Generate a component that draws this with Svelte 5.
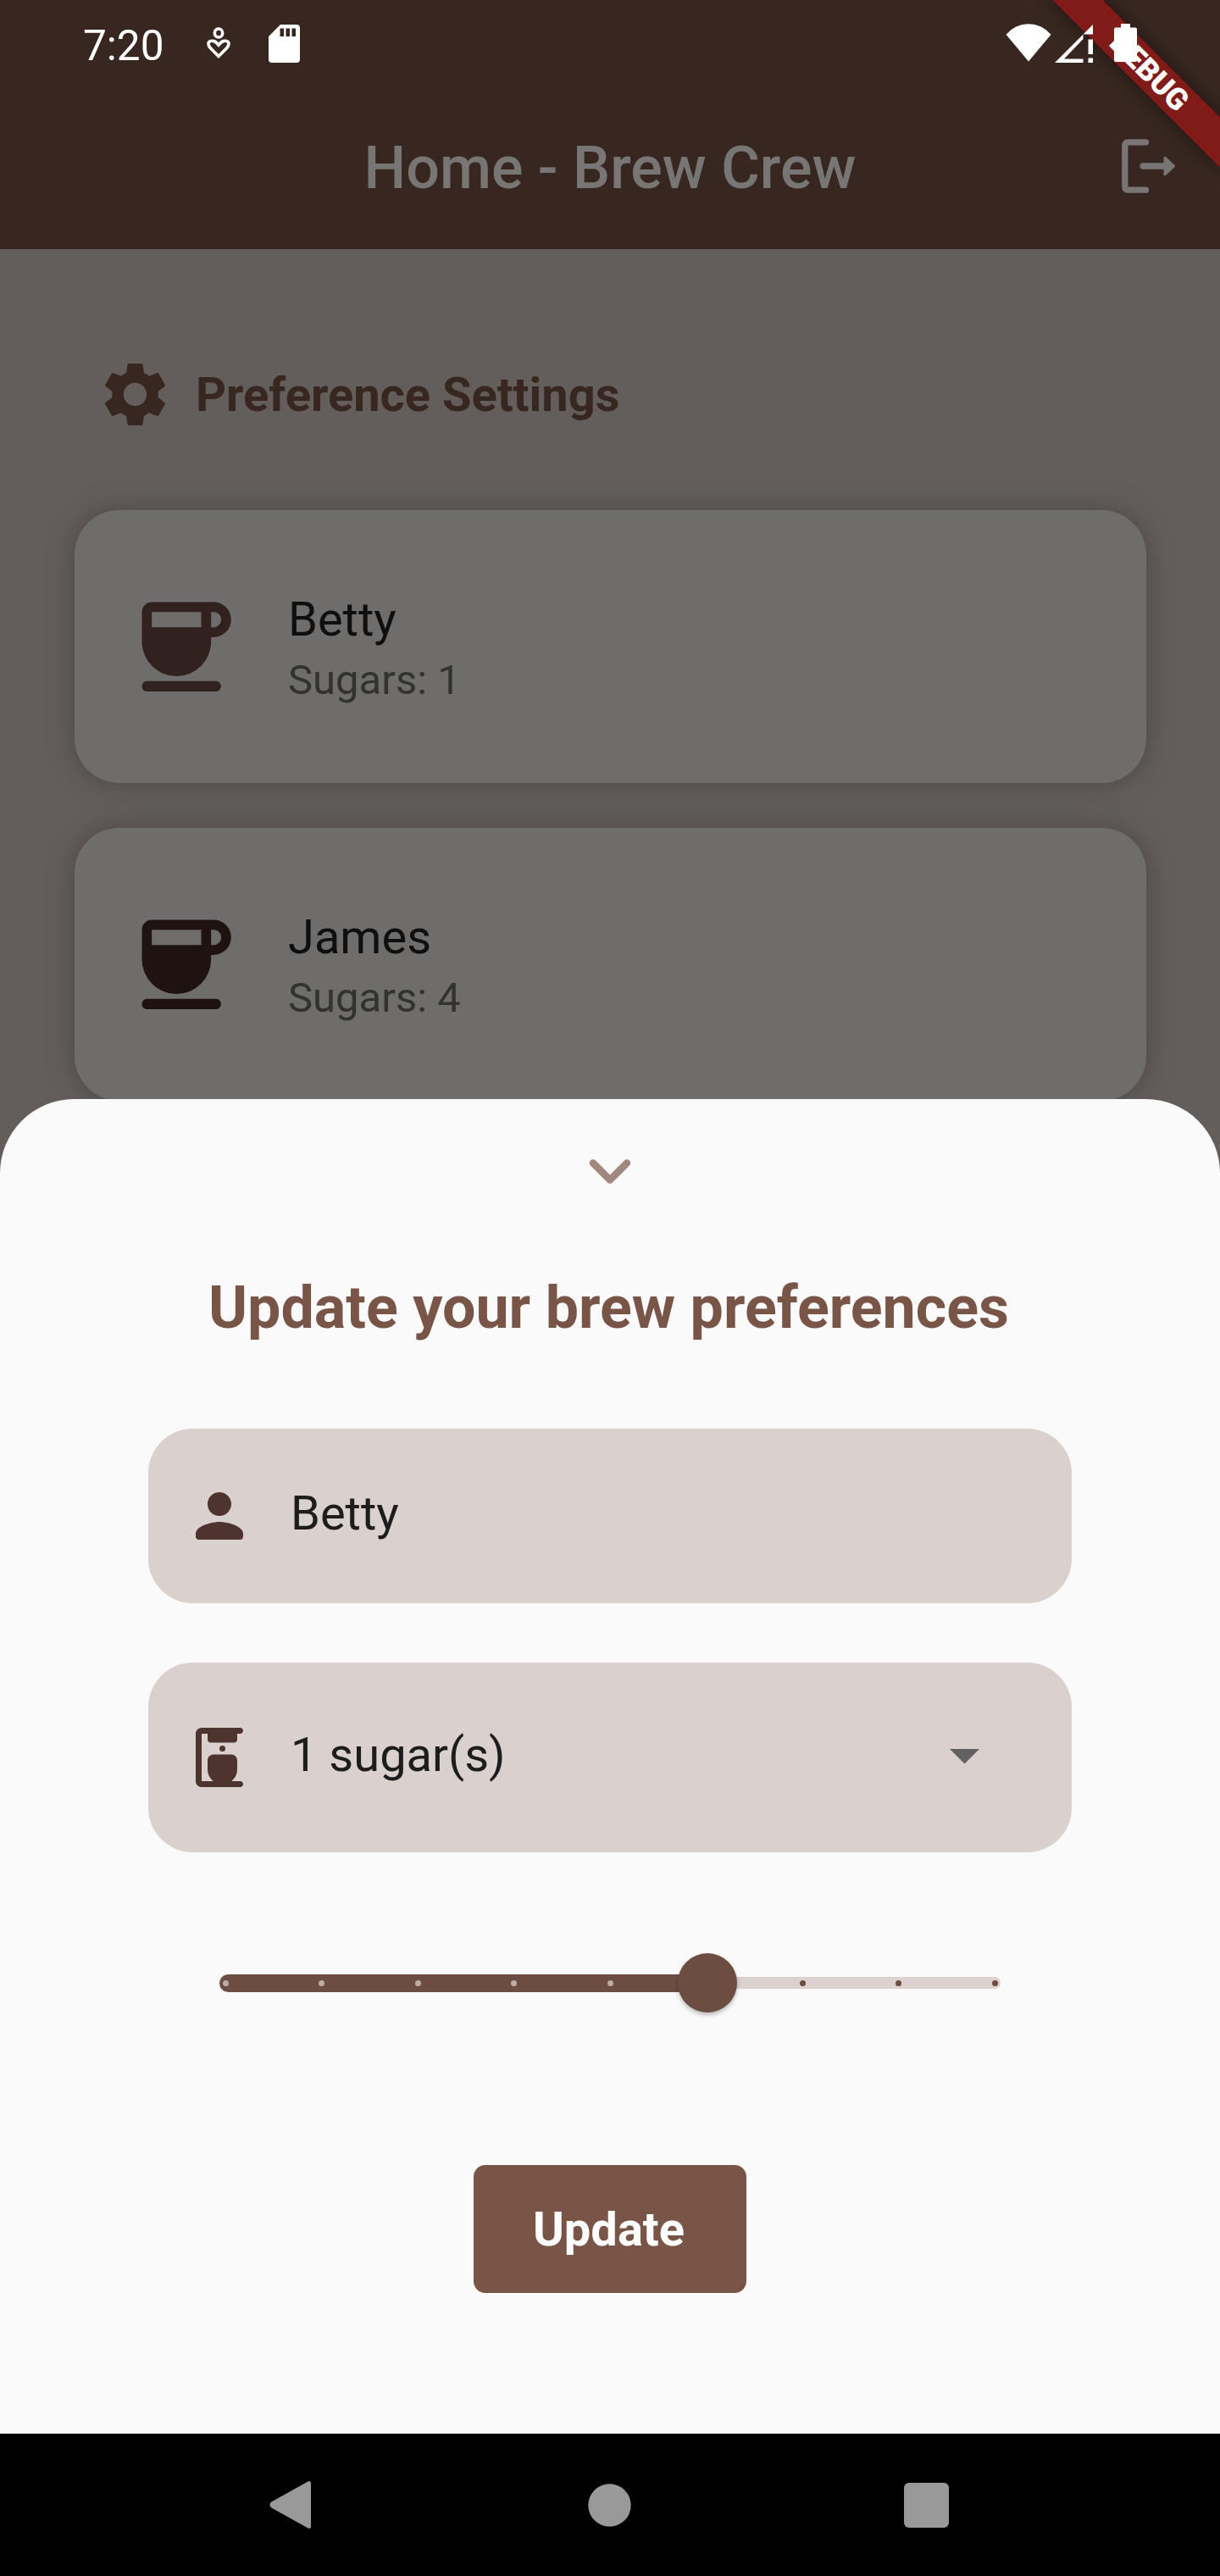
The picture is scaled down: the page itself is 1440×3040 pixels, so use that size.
<script>
  const brews = [
    { name: 'Betty', sugars: 1, tone: 'medium' },
    { name: 'James', sugars: 4, tone: 'dark' }
  ];
  const steps = [0, 1, 2, 3, 4, 5, 6, 7, 8];
  const strength = 5;
</script>

<div class="screen">
  <header class="top">
    <div class="status">
      <span class="clock">7:20</span>
      <svg class="wellbeing" width="28" height="40" viewBox="0 0 28 40" fill="none" stroke="#fff" stroke-width="3.6">
        <ellipse cx="14" cy="8" rx="4.7" ry="5" />
        <path d="M14 35.5L4.2 25.5C-.2 20.2 2.8 17.2 6.3 17.2C9.8 17.2 11 18.7 14 22.2C17 18.7 18.2 17.2 21.7 17.2C25.2 17.2 28.2 20.2 23.8 25.5Z" />
      </svg>
      <svg class="sd" width="37" height="45" viewBox="0 0 37 45">
        <path fill="#fff" fill-rule="evenodd" d="M14 0H33a4 4 0 0 1 4 4V41a4 4 0 0 1-4 4H4a4 4 0 0 1-4-4V14ZM13.5 4.5V14h4.5V4.5ZM20.5 4.5V14h4.5V4.5ZM27.5 4.5V14h4.5V4.5Z" />
      </svg>
      <svg class="wifi" width="54" height="45" viewBox="0 0 54 45">
        <path fill="#fff" d="M27 44.5L.5 12.7A34.5 34.5 0 0 1 53.5 12.7Z" />
      </svg>
      <svg class="signal" width="45" height="45" viewBox="0 0 45 45" fill="#fff">
        <path d="M0 45L33.5 11.5V17L11 40.5H33.5V45ZM33.5 11.5L45 0V11.5ZM39.5 17.5H45V35H39.5ZM39.5 39.5H45V45H39.5Z" />
      </svg>
      <svg class="battery" width="27" height="45" viewBox="0 0 27 45">
        <path fill="#fff" d="M8 0H19V4.5H25a2 2 0 0 1 2 2V43a2 2 0 0 1-2 2H2a2 2 0 0 1-2-2V6.5a2 2 0 0 1 2-2H8Z" />
      </svg>
    </div>
    <div class="appbar">
      <h1>Home - Brew Crew</h1>
      <button class="logout" aria-label="Log out">
        <svg width="64" height="64" viewBox="0 0 64 64" fill="none" stroke="#777675" stroke-width="7.3" stroke-linecap="round" stroke-linejoin="round">
          <path d="M28.5 3.8H7A3.2 3.2 0 0 0 3.8 7V57A3.2 3.2 0 0 0 7 60.2H28.5M25 32H52" />
          <path fill="#777675" stroke-width="3" d="M51 22.2L61.5 32L51 41.8Z" />
        </svg>
      </button>
    </div>
  </header>
  <div class="corner"><div class="ribbon">DEBUG</div></div>

  <main>
    <button class="prefs">
      <svg width="91" height="91" viewBox="0 0 24 24" fill="currentColor">
        <path d="M19.14 12.94c.04-.3.06-.61.06-.94 0-.32-.02-.64-.07-.94l2.03-1.58c.18-.14.23-.41.12-.61l-1.92-3.32c-.12-.22-.37-.29-.59-.22l-2.39.96c-.5-.38-1.03-.7-1.62-.94l-.36-2.54c-.04-.24-.24-.41-.48-.41h-3.84c-.24 0-.43.17-.47.41l-.36 2.54c-.59.24-1.13.57-1.62.94l-2.39-.96c-.22-.08-.47 0-.59.22L2.74 8.87c-.12.21-.08.47.12.61l2.03 1.58c-.05.3-.09.63-.09.94s.02.64.07.94l-2.03 1.58c-.18.14-.23.41-.12.61l1.92 3.32c.12.22.37.29.59.22l2.39-.96c.5.38 1.03.7 1.62.94l.36 2.54c.05.24.24.41.48.41h3.84c.24 0 .44-.17.47-.41l.36-2.54c.59-.24 1.13-.56 1.62-.94l2.39.96c.22.08.47 0 .59-.22l1.92-3.32c.12-.22.07-.47-.12-.61l-2.01-1.58zM12 15.6c-1.98 0-3.6-1.62-3.6-3.6s1.62-3.6 3.6-3.6 3.6 1.62 3.6 3.6-1.62 3.6-3.6 3.6z" />
      </svg>
      <span>Preference Settings</span>
    </button>

    <div class="list">
      {#each brews as brew}
        <article class="card">
          <svg class={brew.tone} width="140" height="140" viewBox="0 0 24 24" fill="currentColor">
            <path fill-rule="evenodd" d="M5 3H17.5a3.5 3.5 0 0 1 0 7.1H17V11a7 7 0 0 1-14 0V5a2 2 0 0 1 2-2ZM5 5V8.1H15V5ZM17 5V8.1H17.5a1.5 1.5 0 0 0 0-3.1Z" />
            <rect x="3" y="19" width="16" height="2.1" rx="1" />
          </svg>
          <div class="info">
            <div class="name">{brew.name}</div>
            <div class="sugars">Sugars: {brew.sugars}</div>
          </div>
        </article>
      {/each}
    </div>
  </main>

  <section class="sheet">
    <svg class="chevron" width="50" height="30" viewBox="0 0 50 30" fill="none" stroke="#a1887f" stroke-width="8.5" stroke-linecap="round" stroke-linejoin="round">
      <path d="M5 4.5L25 24.5L45 4.5" />
    </svg>
    <h2>Update your brew preferences</h2>

    <div class="field person">
      <svg width="84" height="84" viewBox="0 0 24 24" fill="#4e342e">
        <path d="M12 12c2.21 0 4-1.79 4-4s-1.79-4-4-4-4 1.79-4 4 1.79 4 4 4zm0 2c-2.67 0-8 1.34-8 4v1c0 .55.45 1 1 1h14c.55 0 1-.45 1-1v-1c0-2.66-5.33-4-8-4z" />
      </svg>
      <span>Betty</span>
    </div>

    <div class="field amount">
      <svg width="84" height="84" viewBox="0 0 24 24" fill="#4e342e">
        <path d="M18 6V4h1c.55 0 1-.45 1-1s-.45-1-1-1H6c-1.1 0-2 .9-2 2v16c0 1.1.9 2 2 2h13c.55 0 1-.45 1-1s-.45-1-1-1h-2.97c1.2-.91 1.97-2.35 1.97-3.98V13c0-1.1-.9-2-2-2h-6c-1.1 0-2 .9-2 2v3.02c0 1.62.77 3.07 1.97 3.98H6V4h2v2c0 .55.45 1 1 1h8c.55 0 1-.45 1-1z" />
        <circle cx="13" cy="9" r="1" />
      </svg>
      <span>1 sugar(s)</span>
      <svg class="caret" width="35" height="18" viewBox="0 0 35 18"><path fill="#616161" d="M0 0H35L17.5 17.5Z" /></svg>
    </div>

    <div class="slider">
      <div class="inactive"></div>
      <div class="active"></div>
      <div class="ticks">
        {#each steps as step}
          <i class:passed={step < strength} class:covered={step === strength}></i>
        {/each}
      </div>
      <div class="thumb"></div>
    </div>

    <button class="update">Update</button>
  </section>

  <nav>
    <svg width="50" height="58" viewBox="0 0 50 58"><path fill="#999" d="M2 25.8L45.5 1.4Q49 0 49 4V54Q49 58 45.5 56.6L2 32.2Q-1 29 2 25.8Z" /></svg>
    <svg class="home" width="51" height="51" viewBox="0 0 51 51"><circle cx="25.5" cy="25.5" r="25.2" fill="#999" /></svg>
    <svg width="53" height="53" viewBox="0 0 53 53"><rect width="53" height="53" rx="6" fill="#999" /></svg>
  </nav>
</div>

<style>
  :global(body) {
    margin: 0;
  }
  .screen {
    position: relative;
    width: 1440px;
    height: 3040px;
    overflow: hidden;
    background: #635e5b;
    font-family: Roboto, sans-serif;
    display: flex;
    flex-direction: column;
  }
  button {
    border: 0;
    padding: 0;
    background: none;
    font-family: inherit;
  }
  svg {
    display: block;
    flex: none;
  }
  .top {
    height: 294px;
    background: #382721;
  }
  .status {
    position: relative;
    z-index: 3;
    height: 98px;
    box-sizing: border-box;
    padding: 28px 98px 0 98px;
    display: flex;
    align-items: flex-start;
  }
  .clock {
    width: 145.5px;
    margin-top: 1px;
    font-size: 49.5px;
    line-height: 50px;
    color: #fff;
  }
  .wellbeing {
    margin-top: 3px;
  }
  .sd {
    margin: 1px 0 0 45px;
  }
  .wifi {
    margin-left: auto;
  }
  .signal {
    margin: 1px 25px 0 4px;
  }
  .appbar {
    position: relative;
    height: 196px;
    display: flex;
    align-items: center;
    justify-content: center;
  }
  h1 {
    margin: 3px 0 0;
    font-size: 70px;
    line-height: 82px;
    font-weight: 500;
    color: #777675;
  }
  .logout {
    position: absolute;
    right: 52px;
    top: 66px;
  }
  .corner {
    position: absolute;
    z-index: 2;
    right: 0;
    top: 0;
    width: 240px;
    height: 260px;
    overflow: hidden;
  }
  .ribbon {
    position: absolute;
    left: 16px;
    top: 63px;
    width: 280px;
    height: 42px;
    line-height: 42px;
    text-align: center;
    text-indent: 2px;
    font-size: 35.7px;
    font-weight: 900;
    color: #fff;
    background: #801b19;
    box-shadow: 0 0 21px rgba(0, 0, 0, 0.5);
    transform: rotate(45deg);
  }
  main {
    padding: 126px 87.5px 0;
  }
  .prefs {
    display: flex;
    align-items: center;
    gap: 26px;
    padding-left: 26.5px;
    color: #382721;
    font-size: 56px;
    line-height: 66px;
    font-weight: 700;
  }
  .list {
    margin-top: 91px;
    display: flex;
    flex-direction: column;
    gap: 53px;
  }
  .card {
    height: 322px;
    box-sizing: border-box;
    padding: 0 62px 0 62px;
    display: flex;
    align-items: center;
    border-radius: 52.5px;
    background: #6e6d6b;
    box-shadow: 0 0 31px #4c4645;
  }
  .medium {
    color: #32221f;
  }
  .dark {
    color: #1e1310;
  }
  .info {
    margin: 4px 0 0 50.5px;
  }
  .name {
    font-size: 56px;
    line-height: 66px;
    color: #0f0f0f;
  }
  .sugars {
    margin-top: 9px;
    font-size: 49px;
    line-height: 60px;
    color: #323231;
  }
  .sheet {
    position: absolute;
    z-index: 1;
    left: 0;
    right: 0;
    top: 1297px;
    height: 1575px;
    box-sizing: border-box;
    padding-top: 71px;
    border-radius: 87.5px 87.5px 0 0;
    background: #fafafa;
    display: flex;
    flex-direction: column;
    align-items: center;
  }
  h2 {
    margin: 104px 3px 0 0;
    font-size: 70px;
    line-height: 82px;
    font-weight: 700;
    color: #795548;
    white-space: nowrap;
  }
  .field {
    width: 1090px;
    box-sizing: border-box;
    padding-left: 42px;
    display: flex;
    align-items: center;
    border-radius: 52.5px;
    background: #dad0cd;
    font-size: 56px;
    line-height: 66px;
    color: #1e1d1d;
  }
  .field span {
    margin-left: 42px;
  }
  .person {
    margin-top: 101.5px;
    height: 206.5px;
  }
  .person span {
    margin-top: -6px;
  }
  .amount {
    margin-top: 70px;
    height: 224px;
  }
  .amount span {
    margin-top: -6px;
  }
  .caret {
    margin: -2px 109px 0 auto;
  }
  .slider {
    position: relative;
    width: 922px;
    height: 70px;
    margin-top: 119px;
    display: grid;
    align-items: center;
  }
  .slider > div {
    grid-area: 1 / 1;
  }
  .inactive {
    height: 14px;
    border-radius: 7px;
    background: #dbd1ce;
  }
  .active {
    width: 576px;
    height: 21px;
    border-radius: 10.5px 0 0 10.5px;
    background: #6d4c41;
  }
  .ticks {
    padding: 0 3.5px;
    display: flex;
    justify-content: space-between;
  }
  .ticks i {
    width: 7px;
    height: 7px;
    border-radius: 50%;
    background: #6d4c41;
  }
  .ticks .passed {
    background: #c0aca6;
  }
  .ticks .covered {
    visibility: hidden;
  }
  .thumb {
    width: 70px;
    height: 70px;
    margin-left: 541px;
    border-radius: 50%;
    background: #6d4c41;
    box-shadow: 0 3px 5px rgba(0, 0, 0, 0.26);
  }
  .update {
    width: 322px;
    height: 150.5px;
    margin-top: 180px;
    padding: 1px 3px 0 0;
    border-radius: 14px;
    background: #795548;
    color: #fff;
    font-size: 56px;
    line-height: 66px;
    font-weight: 700;
  }
  nav {
    position: absolute;
    left: 0;
    right: 0;
    bottom: 0;
    height: 168px;
    box-sizing: border-box;
    padding: 0 320.5px 0 318px;
    display: flex;
    align-items: center;
    justify-content: space-between;
    background: #000;
  }
  .home {
    margin-left: 5px;
  }
</style>
